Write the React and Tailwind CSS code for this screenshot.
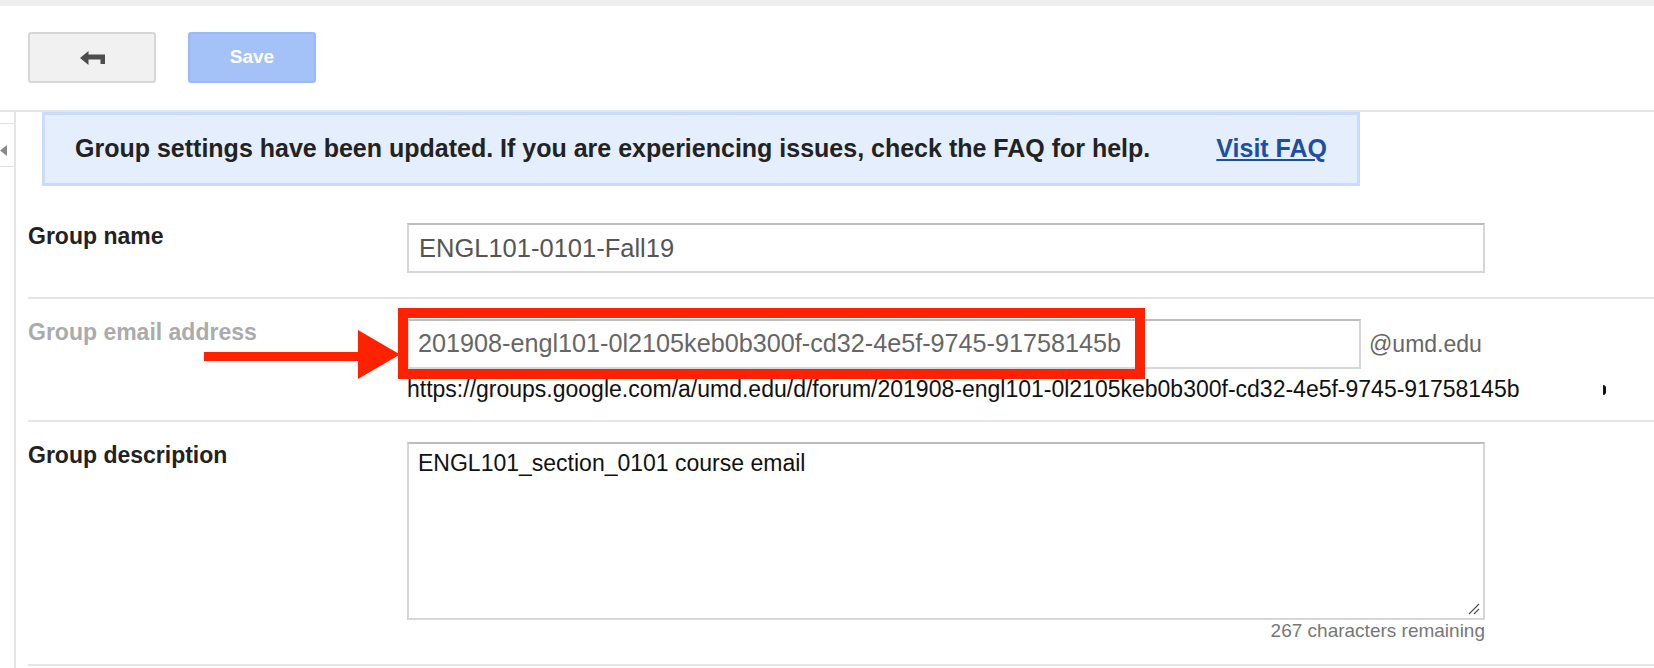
import React from "react";

const BackIcon = () => (
  <svg width="25" height="14" viewBox="0 0 25 14" fill="#4d4d4d">
    <path d="M0 7 L8.5 0 L8.5 3.5 L25 3.5 L25 13 L20.5 13 L20.5 8.5 L8.5 8.5 L8.5 14 Z" />
  </svg>
);

const Grip = () => (
  <svg width="12" height="12" viewBox="0 0 12 12" className="absolute right-[3px] bottom-[3px]">
    <path d="M1 11 L11 1 M6 11 L11 6" stroke="#555" strokeWidth="1.2" />
  </svg>
);

const Row = ({ label, muted, children, className = "" }) => (
  <div className={`relative flex border-b-2 border-[#e5e5e5] ${className}`}>
    <div
      className={`w-[379px] shrink-0 text-[23px] leading-[27px] font-bold ${
        muted ? "text-[#ababab]" : "text-[#222]"
      }`}
    >
      {label}
    </div>
    <div className="flex-1">{children}</div>
  </div>
);

export default function App() {
  return (
    <div className="h-[668px] w-full overflow-hidden bg-white font-['Liberation_Sans',Arial,Helvetica,sans-serif]">
      <div className="h-[6px] bg-[#eeeeee]" />

      {/* toolbar */}
      <div className="flex h-[104px] items-start gap-[32px] px-[28px] pt-[26px]">
        <button className="flex h-[51px] w-[128px] items-center justify-center rounded-[3px] border-2 border-[#d6d6d6] bg-[#f1f1f1]">
          <BackIcon />
        </button>
        <button className="h-[51px] w-[128px] rounded-[3px] border-2 border-[#9bb9f5] bg-[#a4c2f8] text-[19px] font-bold text-white">
          Save
        </button>
      </div>

      <div className="flex border-t-2 border-[#e5e5e5]">
        {/* collapsed side tab */}
        <div className="w-[14px] shrink-0">
          <div className="h-[12px] border-b border-[#e2e2e2]" />
          <div className="flex h-[43px] items-center border-b border-[#e2e2e2]">
            <svg width="7" height="11" viewBox="0 0 7 11" className="mt-[10px]">
              <path d="M7 0 L0 5.5 L7 11 Z" fill="#8a8a8a" />
            </svg>
          </div>
        </div>

        <main className="h-[556px] flex-1 border-l-2 border-[#e5e5e5]">
          {/* notice banner */}
          <div className="ml-[26px] flex h-[74px] w-[1318px] items-center justify-between border-[3px] border-[#c9dcfb] bg-[#e4eefd] px-[30px] text-[25px] font-bold">
            <span className="text-[#222]">
              Group settings have been updated. If you are experiencing issues, check the FAQ for help.
            </span>
            <a href="#" className="text-[#1d4ea3] underline">
              Visit FAQ
            </a>
          </div>

          <div className="mt-[37px] pl-[12px]">
            <Row label="Group name" className="pb-[24px]">
              <div className="flex h-[50px] w-[1078px] items-center border-2 border-[#d6d6d6] border-t-[#bdbdbd] pl-[10px] text-[25.5px] text-[#555]">
                ENGL101-0101-Fall19
              </div>
            </Row>

            <Row label="Group email address" muted className="pt-[20px] pb-[17px]">
              <div className="flex items-center">
                <div className="flex h-[50px] w-[954px] items-center border-2 border-[#d6d6d6] border-t-[#bdbdbd] pl-[9px] text-[25.2px] text-[#666]">
                  201908-engl101-0l2105keb0b300f-cd32-4e5f-9745-91758145b
                </div>
                <span className="ml-[8px] text-[23px] text-[#666]">@umd.edu</span>
              </div>
              <div className="mt-[7px] flex items-center text-[23px] leading-[27px] text-[#111]">
                <span>https://groups.google.com/a/umd.edu/d/forum/201908-engl101-0l2105keb0b300f-cd32-4e5f-9745-91758145b</span>
                <span className="mr-[48px] ml-auto h-[10px] w-[3px] rounded-r-full bg-[#111]" />
              </div>

              {/* annotation */}
              <div className="pointer-events-none absolute top-[9px] left-[370px] h-[71px] w-[747px] border-[10px] border-[#ff2200]" />
              <svg
                width="196"
                height="49"
                viewBox="0 0 196 49"
                className="pointer-events-none absolute top-[31px] left-[176px]"
              >
                <rect x="0" y="22" width="158" height="9" fill="#ff2200" />
                <path d="M154 0 L196 24.5 L154 49 Z" fill="#ff2200" />
              </svg>
            </Row>

            <Row label="Group description" className="pt-[20px] pb-[22px]">
              <div className="relative h-[178px] w-[1078px] border-2 border-[#d6d6d6] border-t-[#bdbdbd] pt-[6px] pl-[9px] text-[23px] leading-[27px] text-[#111]">
                ENGL101_section_0101 course email
                <Grip />
              </div>
              <div className="w-[1078px] text-right text-[19px] leading-[22px] text-[#777]">
                267 characters remaining
              </div>
            </Row>
          </div>
        </main>
      </div>
    </div>
  );
}
